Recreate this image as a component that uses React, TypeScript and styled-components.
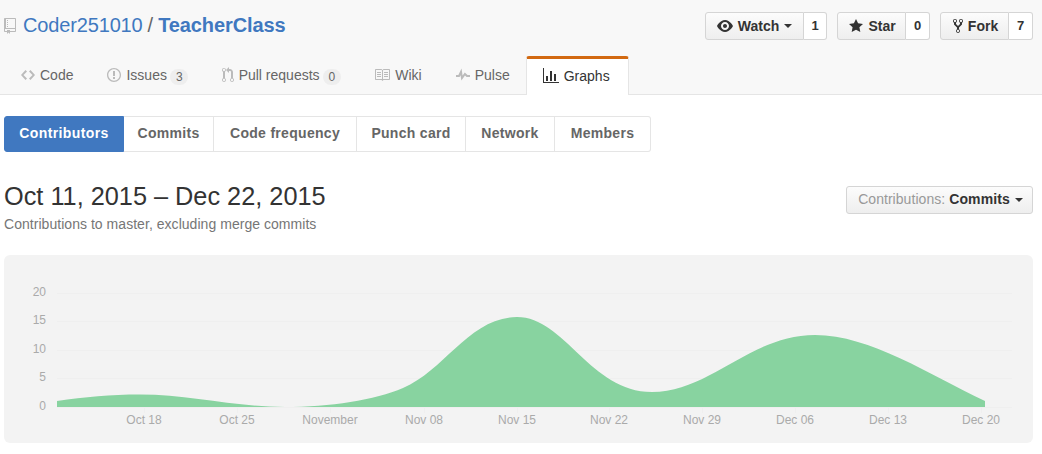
import React from 'react';
import styled, { createGlobalStyle } from 'styled-components';

const GlobalStyle = createGlobalStyle`
    body {
        margin: 0;
        background: #fff;
        color: #333;
        font-family: "Liberation Sans", Arial, sans-serif;
        font-size: 14px;
    }
`;

const ICONS: Record<string, { width: number; d: string }> = {
    repo: {
        width: 12,
        d: 'M4 9H3V8h1v1zm0-3H3v1h1V6zm0-2H3v1h1V4zm0-2H3v1h1V2zm8-1v12c0 .55-.45 1-1 1H6v2l-1.5-1.5L3 16v-2H1c-.55 0-1-.45-1-1V1c0-.55.45-1 1-1h10c.55 0 1 .45 1 1zm-1 10H1v2h2v-1h3v1h5v-2zm0-10H2v9h9V1z'
    },
    code: {
        width: 14,
        d: 'M9.5 3L8 4.5 11.5 8 8 11.5 9.5 13 14 8 9.5 3zm-5 0L0 8l4.5 5L6 11.5 2.5 8 6 4.5 4.5 3z'
    },
    issue: {
        width: 14,
        d: 'M7 2.3c3.14 0 5.7 2.56 5.7 5.7s-2.56 5.7-5.7 5.7A5.71 5.71 0 011.3 8c0-3.14 2.56-5.7 5.7-5.7zM7 1C3.14 1 0 4.14 0 8s3.14 7 7 7 7-3.14 7-7-3.14-7-7-7zm1 3H6v5h2V4zm0 6H6v2h2v-2z'
    },
    pull: {
        width: 12,
        d: 'M11 11.28V5c-.03-.78-.34-1.47-.94-2.06C9.46 2.35 8.78 2.03 8 2H7V0L4 3l3 3V4h1c.27.02.48.11.69.31.21.2.3.42.31.69v6.28A1.993 1.993 0 0010 15a1.993 1.993 0 001-3.72zm-1 2.92c-.66 0-1.2-.55-1.2-1.2 0-.65.55-1.2 1.2-1.2.65 0 1.2.55 1.2 1.2 0 .65-.55 1.2-1.2 1.2zM4 3c0-1.11-.89-2-2-2a1.993 1.993 0 00-1 3.72v6.56A1.993 1.993 0 002 15a1.993 1.993 0 001-3.72V4.72c.59-.34 1-.98 1-1.72zm-.8 10c0 .66-.55 1.2-1.2 1.2-.65 0-1.2-.55-1.2-1.2 0-.65.55-1.2 1.2-1.2.65 0 1.2.55 1.2 1.2zM2 4.2C1.34 4.2.8 3.65.8 3c0-.65.55-1.2 1.2-1.2.65 0 1.2.55 1.2 1.2 0 .65-.55 1.2-1.2 1.2z'
    },
    book: {
        width: 16,
        d: 'M3 5h4v1H3V5zm0 3h4V7H3v1zm0 2h4V9H3v1zm11-5h-4v1h4V5zm0 2h-4v1h4V7zm0 2h-4v1h4V9zm2-6v9c0 .55-.45 1-1 1H9.5l-1 1-1-1H2c-.55 0-1-.45-1-1V3c0-.55.45-1 1-1h5.5l1 1 1-1H15c.55 0 1 .45 1 1zm-8 .5L7.5 3H2v9h6V3.5zm7-.5H9.5l-.5.5V12h6V3z'
    },
    pulse: {
        width: 14,
        d: 'M11.5 8L8.8 5.4 6.6 8.5 5.5 1.6 2.38 8H0v2h3.6l.9-1.8.9 5.4L9 8.5l1.6 1.5H14V8z'
    },
    graph: {
        width: 16,
        d: 'M16 14v1H0V0h1v14h15zM5 13H3V8h2v5zm4 0H7V3h2v10zm4 0h-2V6h2v7z'
    },
    eye: {
        width: 16,
        d: 'M8.06 2C3 2 0 8 0 8s3 6 8.06 6C13 14 16 8 16 8s-3-6-7.94-6zM8 12c-2.2 0-4-1.78-4-4 0-2.2 1.8-4 4-4 2.22 0 4 1.8 4 4 0 2.22-1.78 4-4 4zm2-4c0 1.11-.89 2-2 2-1.11 0-2-.89-2-2 0-1.11.89-2 2-2 1.11 0 2 .89 2 2z'
    },
    star: {
        width: 14,
        d: 'M14 6l-4.9-.64L7 1 4.9 5.36 0 6l3.6 3.26L2.67 14 7 11.67 11.33 14l-.93-4.74L14 6z'
    },
    fork: {
        width: 10,
        d: 'M8 1a1.993 1.993 0 00-1 3.72V6L5 8 3 6V4.72A1.993 1.993 0 002 1a1.993 1.993 0 00-1 3.72V6.5l3 3v1.78A1.993 1.993 0 005 15a1.993 1.993 0 001-3.72V9.5l3-3V4.72A1.993 1.993 0 008 1zM2 4.2C1.34 4.2.8 3.65.8 3c0-.65.55-1.2 1.2-1.2.65 0 1.2.55 1.2 1.2 0 .65-.55 1.2-1.2 1.2zm3 10c-.66 0-1.2-.55-1.2-1.2 0-.65.55-1.2 1.2-1.2.65 0 1.2.55 1.2 1.2 0 .65-.55 1.2-1.2 1.2zm3-10c-.66 0-1.2-.55-1.2-1.2 0-.65.55-1.2 1.2-1.2.65 0 1.2.55 1.2 1.2 0 .65-.55 1.2-1.2 1.2z'
    }
};

const Octicon = ({ name }: { name: string }): JSX.Element => (
    <svg width={ICONS[name].width} height={16} viewBox={`0 0 ${ICONS[name].width} 16`} fill='currentColor'>
        <path d={ICONS[name].d} />
    </svg>
);

const Header = styled.header`
    height: 94px;
    background: #f8f8f8;
    border-bottom: 1px solid #e5e5e5;
    display: flex;
    flex-direction: column;
    justify-content: space-between;
`;

const TopRow = styled.div`
    display: flex;
    justify-content: space-between;
    align-items: flex-start;
    padding: 12px 9px 0 4px;
`;

const Title = styled.h1`
    margin: 0;
    display: flex;
    align-items: center;
    height: 26px;
    font-size: 20px;
    font-weight: normal;
    color: #666;

    svg {
        color: #bbb;
        margin: 1px 7px 0 0;
    }

    a {
        color: #4078c0;
        text-decoration: none;
        letter-spacing: -0.15px;
    }

    b {
        margin-left: 5px;
        color: #4078c0;
        letter-spacing: -0.1px;
    }

    span {
        margin-left: 5px;
    }
`;

const Actions = styled.div`
    display: flex;
    gap: 10px;
`;

const SocialGroup = styled.div`
    display: flex;
    height: 28px;
`;

const SocialButton = styled.div<{ $width: number; $inset?: number }>`
    box-sizing: border-box;
    width: ${(p) => p.$width}px;
    display: flex;
    align-items: center;
    justify-content: center;
    gap: 5px;
    padding: 0 0 1px ${(p) => p.$inset || 0}px;
    font-size: 14px;
    font-weight: bold;
    color: #333;
    background: linear-gradient(#fcfcfc, #eee);
    border: 1px solid #d5d5d5;
    border-radius: 3px 0 0 3px;
`;

const SocialCount = styled.div<{ $width: number }>`
    box-sizing: border-box;
    width: ${(p) => p.$width}px;
    display: flex;
    align-items: center;
    justify-content: center;
    padding-bottom: 1px;
    font-size: 13px;
    font-weight: bold;
    color: #333;
    background: #fff;
    border: 1px solid #d5d5d5;
    border-left: 0;
    border-radius: 0 3px 3px 0;
`;

const Caret = styled.i`
    display: inline-block;
    border-top: 4px solid currentColor;
    border-left: 4px solid transparent;
    border-right: 4px solid transparent;
    border-bottom: 0;
`;

const Tabs = styled.nav`
    display: flex;
    padding-left: 4px;
    margin-bottom: -1px;
`;

const Tab = styled.a<{ $active?: boolean }>`
    box-sizing: border-box;
    height: 39px;
    display: flex;
    align-items: center;
    gap: 5px;
    margin-left: ${(p) => (p.$active ? '-1px' : '0')};
    padding: ${(p) => (p.$active ? '0 18px 2px 16px' : '0 17px 2px')};
    font-size: 14px;
    color: ${(p) => (p.$active ? '#333' : '#666')};
    background: ${(p) => (p.$active ? '#fff' : 'transparent')};
    border: ${(p) => (p.$active ? '1px solid #e5e5e5' : '0')};
    border-top: ${(p) => (p.$active ? '3px solid #d26911' : '0')};
    border-bottom: 0;
    border-radius: 3px 3px 0 0;

    svg {
        color: ${(p) => (p.$active ? '#333' : '#bbb')};
    }
`;

const Counter = styled.span`
    margin: 4px -0.5px 0 -1.5px;
    padding: 2px 5.5px;
    font-size: 12px;
    line-height: 12px;
    color: #666;
    background: #eee;
    border-radius: 20px;
`;

const Main = styled.main`
    padding: 21px 9px 0 4px;
`;

const SubNav = styled.div`
    display: inline-flex;
    height: 36px;
`;

const SubNavItem = styled.a<{ $selected?: boolean; $width: number }>`
    box-sizing: border-box;
    width: ${(p) => p.$width}px;
    display: flex;
    align-items: center;
    justify-content: center;
    padding-bottom: 2px;
    font-size: 14px;
    font-weight: bold;
    letter-spacing: 0.3px;
    color: ${(p) => (p.$selected ? '#fff' : '#666')};
    background: ${(p) => (p.$selected ? '#4078c0' : '#fff')};
    border: 1px solid ${(p) => (p.$selected ? '#4078c0' : '#e5e5e5')};
    border-left: ${(p) => (p.$selected ? '1px solid #4078c0' : '0')};

    &:first-child {
        border-radius: 3px 0 0 3px;
        letter-spacing: 0.38px;
    }

    &:last-child {
        border-radius: 0 3px 3px 0;
    }
`;

const RangeRow = styled.div`
    display: flex;
    justify-content: space-between;
    align-items: flex-start;
    margin-top: 29px;
`;

const RangeTitle = styled.h2`
    margin: 0;
    font-size: 25.3px;
    line-height: 30px;
    font-weight: normal;
    color: #333;
`;

const RangeNote = styled.p`
    margin: 4px 0 0;
    font-size: 14px;
    line-height: 18px;
    letter-spacing: 0.04px;
    color: #767676;
`;

const FilterButton = styled.div`
    box-sizing: border-box;
    width: 187px;
    height: 28px;
    margin-top: 5px;
    display: flex;
    align-items: center;
    justify-content: center;
    gap: 4px;
    padding: 0 0 2px 2px;
    font-size: 14px;
    letter-spacing: 0.05px;
    color: #999;
    background: linear-gradient(#fcfcfc, #eee);
    border: 1px solid #d5d5d5;
    border-radius: 3px;

    b {
        color: #333;
        font-size: 14px;
        letter-spacing: 0.1px;
    }

    i {
        color: #333;
        margin: 2px 0 0 1px;
    }
`;

const GraphPanel = styled.section`
    height: 188px;
    margin-top: 22px;
    background: #f3f3f3;
    border-radius: 6px;
    overflow: hidden;

    svg {
        display: block;
    }

    text {
        font-family: "Liberation Sans", Arial, sans-serif;
        font-size: 12px;
        fill: #aaa;
    }
`;

// chart coordinates are read in page pixels, the svg sits at x=4, y=255
const AREA_PATH =
    'M57 407 L57 401 C85 397 110 394.5 140 394.5 C190 394.5 235 407 285 407 C330 407 375 400 403 388 ' +
    'C445 370 470 317 517 317 C565 317 590 392 652 392 C710 392 750 335 815 335 ' +
    'C870 335 930 375 985 401 L985 407 Z';

const Y_TICKS: Array<[string, number]> = [['20', 293], ['15', 321], ['10', 350], ['5', 378], ['0', 407]];

const X_TICKS: Array<[string, number]> = [
    ['Oct 18', 144], ['Oct 25', 237], ['November', 330], ['Nov 08', 424], ['Nov 15', 517],
    ['Nov 22', 609], ['Nov 29', 702], ['Dec 06', 795], ['Dec 13', 888], ['Dec 20', 981]
];

const Chart = (): JSX.Element => (
    <svg width={1029} height={188} viewBox='4 255 1029 188'>
        {Y_TICKS.map(([label, y]) => (
            <g key={label}>
                <line x1={57} x2={1012} y1={y + 0.5} y2={y + 0.5} stroke='#efefef' />
                <text x={46} y={y + 3} textAnchor='end'>{label}</text>
            </g>
        ))}
        {X_TICKS.map(([label, x]) => (
            <g key={label}>
                <line x1={x + 0.5} x2={x + 0.5} y1={407} y2={413} stroke='#efefef' />
                <text x={x} y={424} textAnchor='middle'>{label}</text>
            </g>
        ))}
        <path d={AREA_PATH} fill='#88d3a0' />
    </svg>
);

const App = (): JSX.Element => (
    <>
        <GlobalStyle />
        <Header>
            <TopRow>
                <Title>
                    <Octicon name='repo' />
                    <a>Coder251010</a>
                    <span>/</span>
                    <b>TeacherClass</b>
                </Title>
                <Actions>
                    <SocialGroup>
                        <SocialButton $width={99}><Octicon name='eye' /> Watch <Caret /></SocialButton>
                        <SocialCount $width={23}>1</SocialCount>
                    </SocialGroup>
                    <SocialGroup>
                        <SocialButton $width={69} $inset={2}><Octicon name='star' /> Star</SocialButton>
                        <SocialCount $width={24}>0</SocialCount>
                    </SocialGroup>
                    <SocialGroup>
                        <SocialButton $width={69} $inset={2}><Octicon name='fork' /> Fork</SocialButton>
                        <SocialCount $width={24}>7</SocialCount>
                    </SocialGroup>
                </Actions>
            </TopRow>
            <Tabs>
                <Tab><Octicon name='code' /> Code</Tab>
                <Tab><Octicon name='issue' /> Issues <Counter>3</Counter></Tab>
                <Tab><Octicon name='pull' /> Pull requests <Counter>0</Counter></Tab>
                <Tab><Octicon name='book' /> Wiki</Tab>
                <Tab><Octicon name='pulse' /> Pulse</Tab>
                <Tab $active><Octicon name='graph' /> Graphs</Tab>
            </Tabs>
        </Header>
        <Main>
            <SubNav>
                <SubNavItem $selected $width={120}>Contributors</SubNavItem>
                <SubNavItem $width={90}>Commits</SubNavItem>
                <SubNavItem $width={143}>Code frequency</SubNavItem>
                <SubNavItem $width={109}>Punch card</SubNavItem>
                <SubNavItem $width={89}>Network</SubNavItem>
                <SubNavItem $width={96}>Members</SubNavItem>
            </SubNav>
            <RangeRow>
                <div>
                    <RangeTitle>Oct 11, 2015 – Dec 22, 2015</RangeTitle>
                    <RangeNote>Contributions to master, excluding merge commits</RangeNote>
                </div>
                <FilterButton>Contributions: <b>Commits</b> <Caret /></FilterButton>
            </RangeRow>
            <GraphPanel>
                <Chart />
            </GraphPanel>
        </Main>
    </>
);

export default App;
